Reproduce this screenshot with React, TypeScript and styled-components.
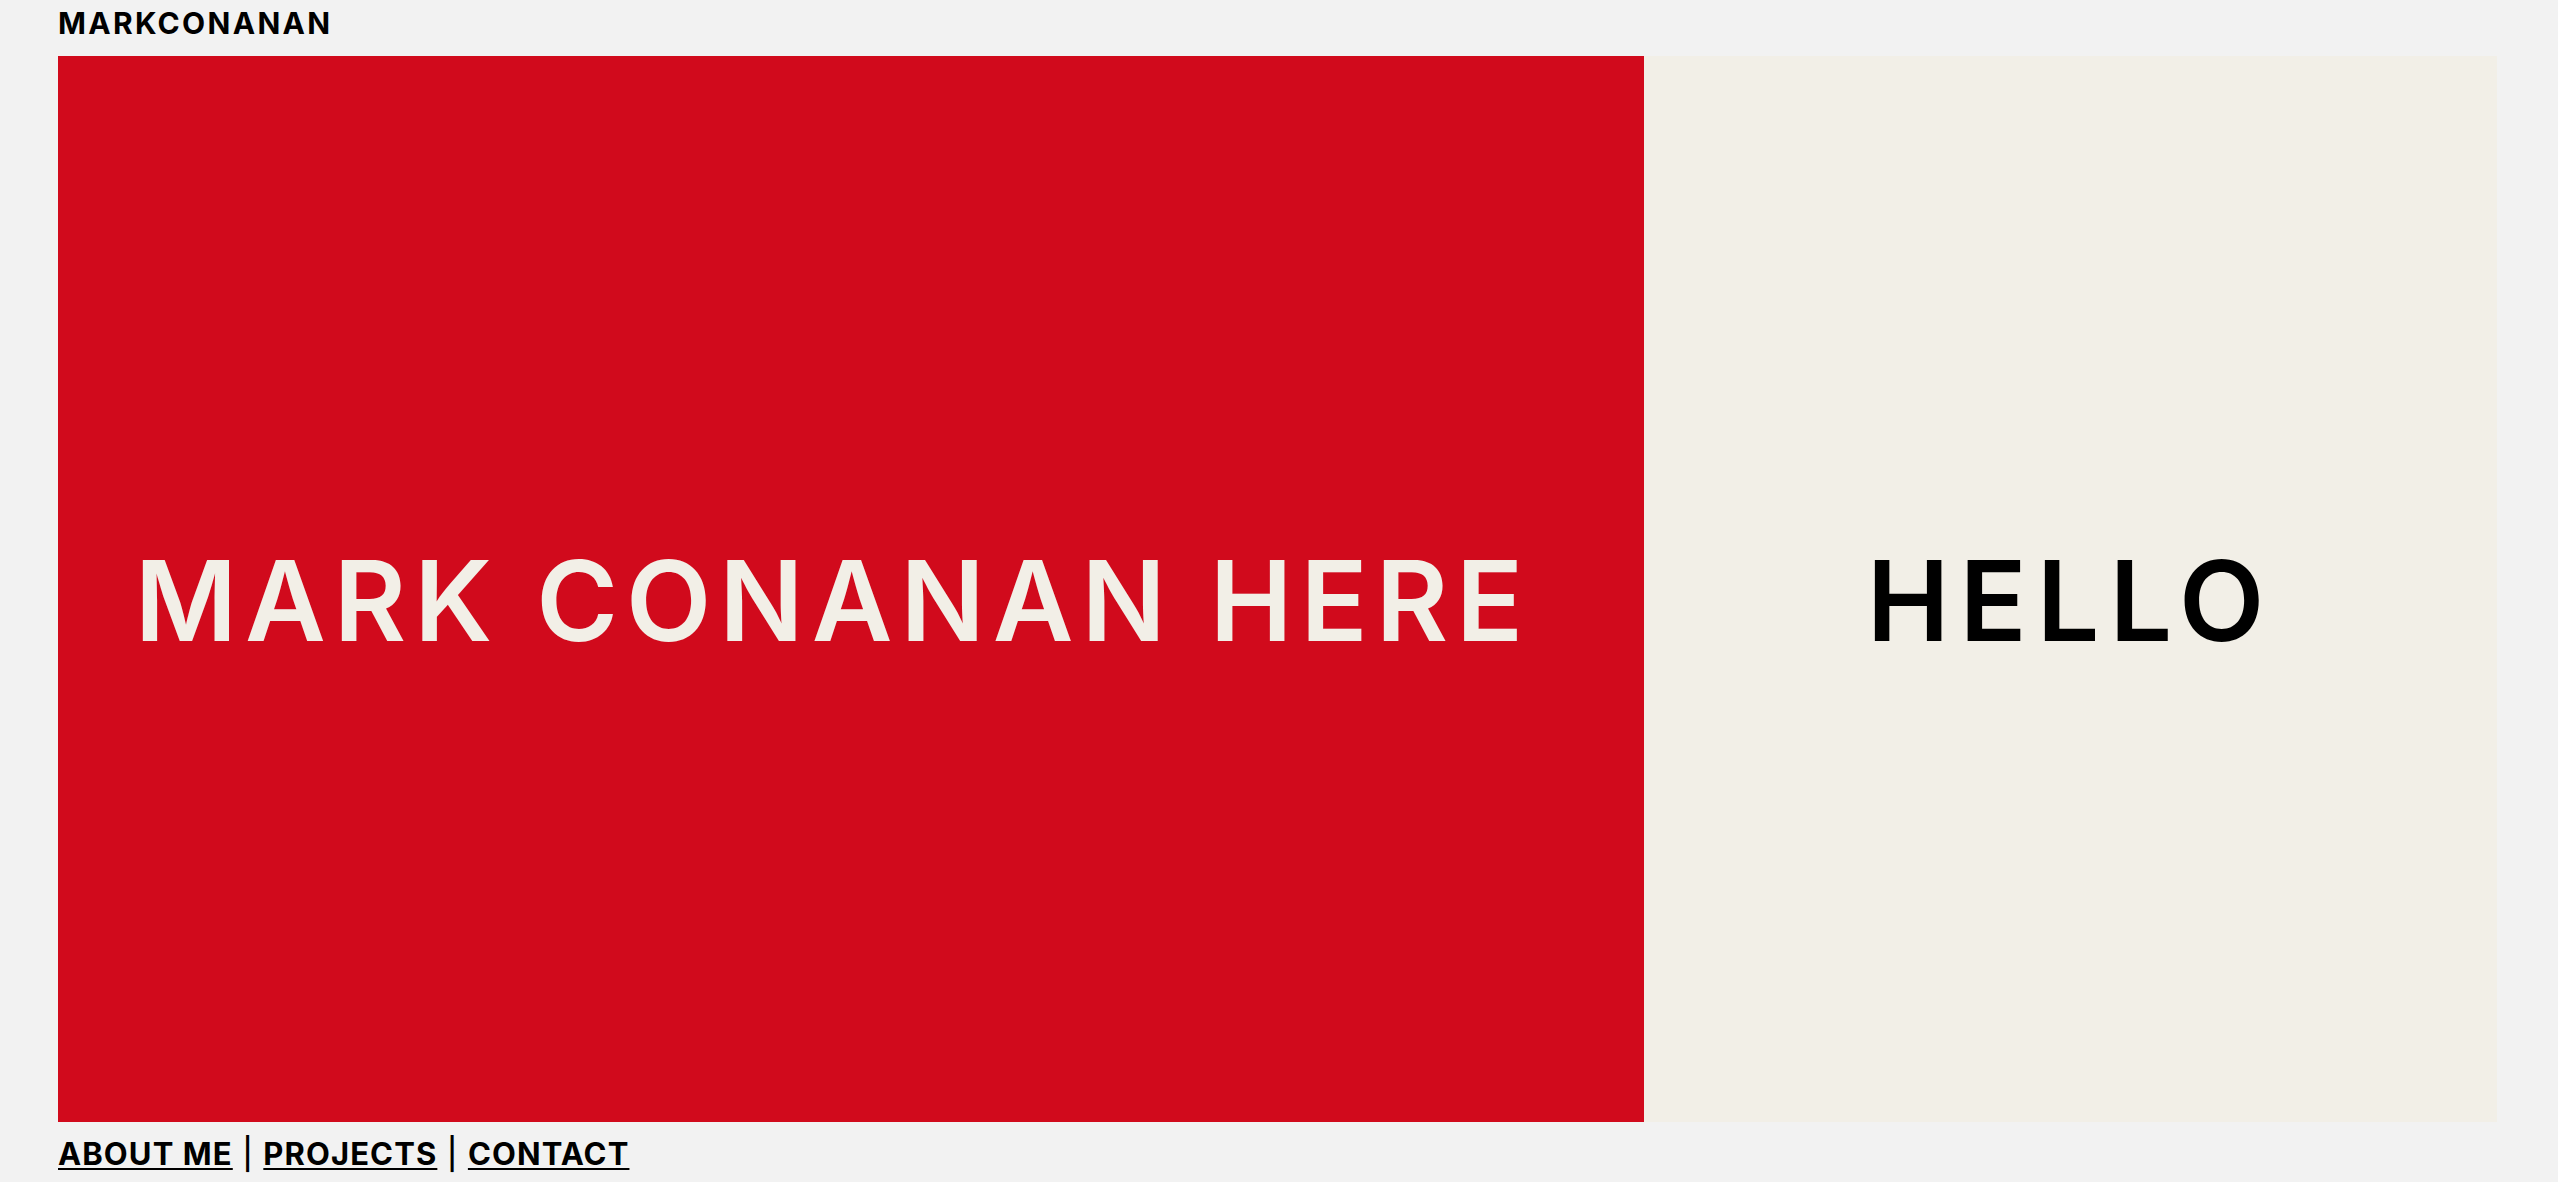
import React from "react";
import styled, { createGlobalStyle } from "styled-components";

// --- CONSTANTS ---
const RED = "#d10a1c";
const CREAM = "#f2efe7";
const PAGE_BG = "#f2f2f2";
const FONT = `"Inter", "Liberation Sans", sans-serif`;

const GlobalStyle = createGlobalStyle`
  html, body {
    margin: 0;
    padding: 0;
    background: ${PAGE_BG};
    font-family: ${FONT};
  }
`;

// --- LAYOUT ---
const Page = styled.div`
  width: 100%;
  height: 1182px;
  box-sizing: border-box;
  padding: 0 61px 0 58px;
  display: flex;
  flex-direction: column;
  overflow: hidden;
`;

const Header = styled.header`
  height: 56px;
  box-sizing: border-box;
  padding-top: 8px;
  font-size: 30px;
  line-height: 30px;
  font-weight: 700;
  letter-spacing: 2.3px;
  color: #000;
`;

const Hero = styled.main`
  height: 1066px;
  display: grid;
  grid-template-columns: 1586fr 853fr;
`;

const Panel = styled.section<{ $bg: string; $fg: string; $shift?: number }>`
  display: flex;
  align-items: center;
  justify-content: center;
  background: ${(p) => p.$bg};
  color: ${(p) => p.$fg};
  padding-right: ${(p) => (p.$shift ? `${p.$shift}px` : "0")};
  padding-top: 22px;
`;

const BigTitle = styled.h1<{ $spacing: number }>`
  margin: 0;
  font-size: 111px;
  line-height: 1;
  font-weight: 600;
  letter-spacing: ${(p) => p.$spacing}px;
  white-space: nowrap;
`;

const Footer = styled.nav`
  padding-top: 15px;
  font-size: 31px;
  line-height: 34px;
  font-weight: 700;
  letter-spacing: 1.1px;
  color: #000;
  white-space: pre;
`;

const NavLink = styled.a`
  color: #000;
  text-decoration: underline;
  text-decoration-thickness: 2px;
  text-underline-offset: 3px;
  cursor: pointer;
`;

const Sep = styled.span`
  font-weight: 500;
`;

const links = ["ABOUT ME", "PROJECTS", "CONTACT"];

const App: React.FC = () => {
  return (
    <>
      <GlobalStyle />
      <Page>
        <Header>MARKCONANAN</Header>
        <Hero>
          <Panel $bg={RED} $fg={CREAM} $shift={36}>
            <BigTitle $spacing={8}>MARK CONANAN HERE</BigTitle>
          </Panel>
          <Panel $bg={CREAM} $fg="#000">
            <BigTitle $spacing={10}>HELLO</BigTitle>
          </Panel>
        </Hero>
        <Footer>
          {links.map((l, i) => (
            <React.Fragment key={l}>
              {i > 0 && <Sep> | </Sep>}
              <NavLink>{l}</NavLink>
            </React.Fragment>
          ))}
        </Footer>
      </Page>
    </>
  );
};

export default App;
